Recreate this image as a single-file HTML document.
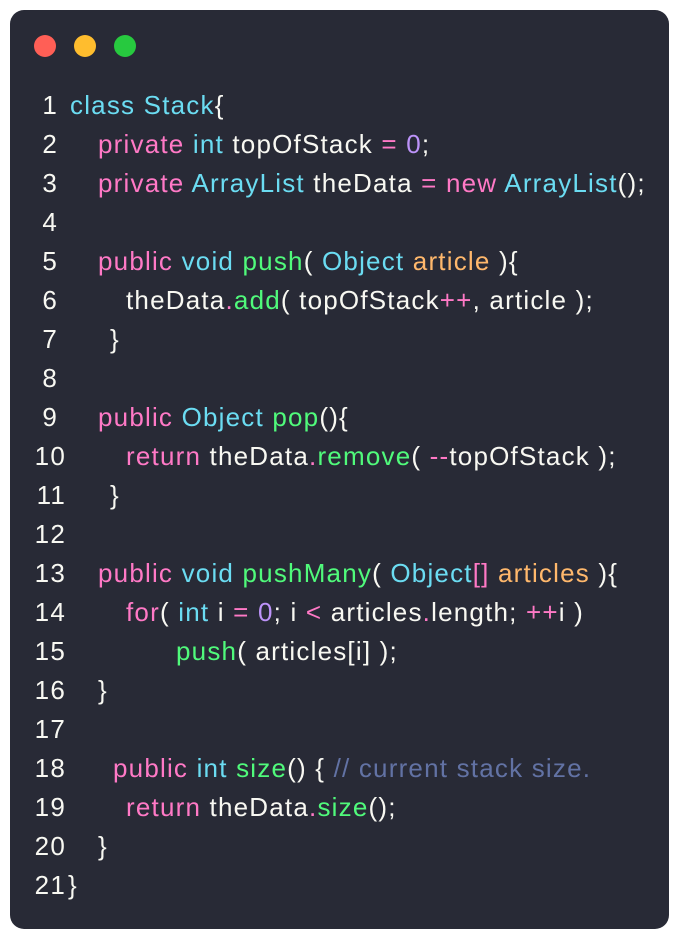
<!DOCTYPE html>
<html><head><meta charset="utf-8"><style>
html,body{margin:0;padding:0;background:#fff;width:679px;height:939px;overflow:hidden}
.card{position:absolute;left:10px;top:10px;width:659px;height:919px;background:#282a36;border-radius:14px}
.dot{position:absolute;top:35px;width:22px;height:22px;border-radius:50%}
.l{position:absolute;left:0;height:39px;line-height:39px;font-family:"Liberation Sans","DejaVu Sans",sans-serif;font-size:26px;letter-spacing:1.2px;color:#f8f8f2;white-space:pre}
.n{position:absolute;width:56px;text-align:right;left:0}
.c{position:absolute}
.p{color:#ff79c6}.b{color:#6bdcf2}.g{color:#50fa7b}.o{color:#ffb86c}.v{color:#bd93f9}.m{color:#6272a4}
</style></head><body>
<div class="card"></div>
<div class="dot" style="left:34px;background:#ff5f56"></div>
<div class="dot" style="left:74px;background:#ffbd2e"></div>
<div class="dot" style="left:114px;background:#27c93f"></div>

<div class="l" style="top:86px"><span class="n" style="width:58px">1</span><span class="c" style="left:70px"><span class="b">class Stack</span>{</span></div>
<div class="l" style="top:125px"><span class="n" style="width:58px">2</span><span class="c" style="left:98px"><span class="p">private</span> <span class="b">int</span> topOfStack <span class="p">=</span> <span class="v">0</span>;</span></div>
<div class="l" style="top:164px"><span class="n" style="width:58px">3</span><span class="c" style="left:98px"><span class="p">private</span> <span class="b">ArrayList</span> theData <span class="p">=</span> <span class="p">new</span> <span class="b">ArrayList</span>();</span></div>
<div class="l" style="top:203px"><span class="n" style="width:58px">4</span></div>
<div class="l" style="top:242px"><span class="n" style="width:58px">5</span><span class="c" style="left:98px"><span class="p">public</span> <span class="b">void</span> <span class="g">push</span>( <span class="b">Object</span> <span class="o">article</span> ){</span></div>
<div class="l" style="top:281px"><span class="n" style="width:58px">6</span><span class="c" style="left:126px">theData<span class="p">.</span><span class="g">add</span>( topOfStack<span class="p">++</span>, article );</span></div>
<div class="l" style="top:320px"><span class="n" style="width:58px">7</span><span class="c" style="left:110px">}</span></div>
<div class="l" style="top:359px"><span class="n" style="width:58px">8</span></div>
<div class="l" style="top:398px"><span class="n" style="width:58px">9</span><span class="c" style="left:98px"><span class="p">public</span> <span class="b">Object</span> <span class="g">pop</span>(){</span></div>
<div class="l" style="top:437px"><span class="n" style="width:66px">10</span><span class="c" style="left:126px"><span class="p">return</span> theData<span class="p">.</span><span class="g">remove</span>( <span class="p">--</span>topOfStack );</span></div>
<div class="l" style="top:476px"><span class="n" style="width:66px">11</span><span class="c" style="left:110px">}</span></div>
<div class="l" style="top:515px"><span class="n" style="width:66px">12</span></div>
<div class="l" style="top:554px"><span class="n" style="width:66px">13</span><span class="c" style="left:98px"><span class="p">public</span> <span class="b">void</span> <span class="g">pushMany</span>( <span class="b">Object</span><span class="p">[]</span> <span class="o">articles</span> ){</span></div>
<div class="l" style="top:593px"><span class="n" style="width:66px">14</span><span class="c" style="left:126px"><span class="p">for</span>( <span class="b">int</span> i <span class="p">=</span> <span class="v">0</span>; i <span class="p">&lt;</span> articles<span class="p">.</span>length; <span class="p">++</span>i )</span></div>
<div class="l" style="top:632px"><span class="n" style="width:66px">15</span><span class="c" style="left:176px"><span class="g">push</span>( articles[i] );</span></div>
<div class="l" style="top:671px"><span class="n" style="width:66px">16</span><span class="c" style="left:98px">}</span></div>
<div class="l" style="top:710px"><span class="n" style="width:66px">17</span></div>
<div class="l" style="top:749px"><span class="n" style="width:66px">18</span><span class="c" style="left:113px"><span class="p">public</span> <span class="b">int</span> <span class="g">size</span>() { <span class="m">// current stack size.</span></span></div>
<div class="l" style="top:788px"><span class="n" style="width:66px">19</span><span class="c" style="left:126px"><span class="p">return</span> theData<span class="p">.</span><span class="g">size</span>();</span></div>
<div class="l" style="top:827px"><span class="n" style="width:66px">20</span><span class="c" style="left:98px">}</span></div>
<div class="l" style="top:866px"><span class="n" style="width:66px">21</span><span class="c" style="left:68px">}</span></div>
</body></html>
